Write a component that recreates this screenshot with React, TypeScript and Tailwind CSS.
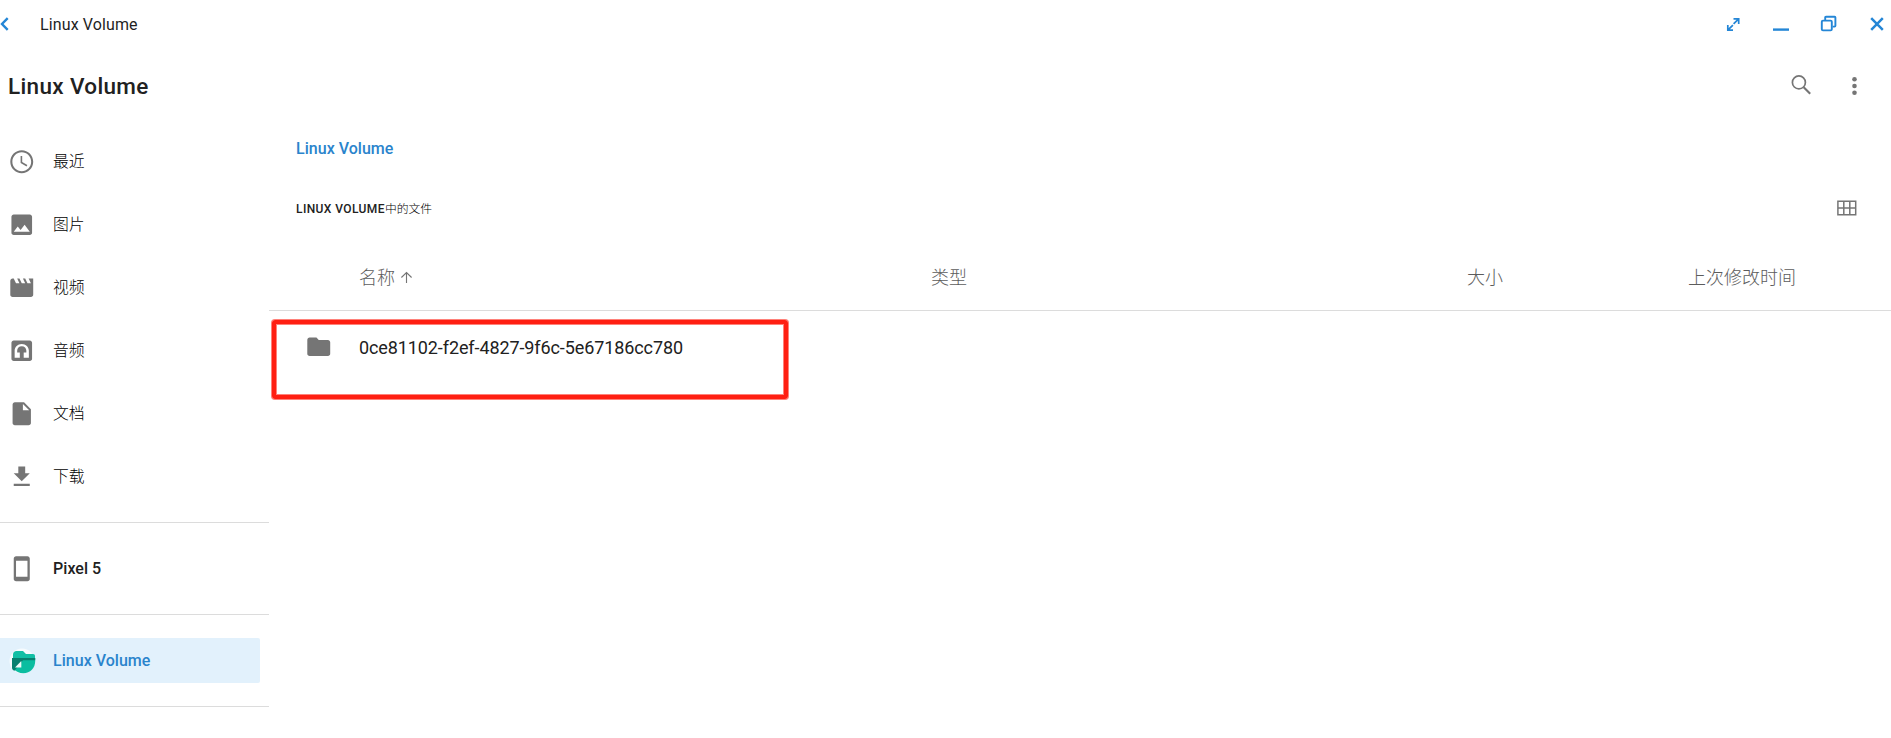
import React from "react";

const SANS = "font-['Roboto','Noto_Sans_CJK_SC',sans-serif]";

function Glyph({ d }: { d: string }) {
  return (
    <svg viewBox="0 0 24 24" className="block h-[27.5px] w-[27.5px] shrink-0 fill-[#757575]">
      <path fillRule="evenodd" d={d} />
    </svg>
  );
}

const icons = {
  recent:
    "M11.99 2C6.47 2 2 6.48 2 12s4.47 10 9.99 10C17.52 22 22 17.52 22 12S17.52 2 11.99 2zM12 20.2c-4.500 0-8.200-3.700-8.200-8.200S7.500 3.800 12 3.800s8.200 3.700 8.200 8.200-3.700 8.200-8.200 8.200zM12.400 7H11v6l5.200 3.100.7-1.200-4.500-2.650z",
  image:
    "M21 19V5c0-1.1-.9-2-2-2H5c-1.1 0-2 .9-2 2v14c0 1.1.9 2 2 2h14c1.1 0 2-.9 2-2zM8.5 13.5l2.5 3.01L14.5 12l4.5 6H5l3.5-4.5z",
  movie:
    "M18 4l2 4h-3l-2-4h-2l2 4h-3l-2-4H8l2 4H7L5 4H4c-1.1 0-1.99.9-1.99 2L2 18c0 1.1.9 2 2 2h16c1.1 0 2-.9 2-2V4h-4z",
  audio:
    "M5 3h14c1.1 0 2 .9 2 2v14c0 1.1-.9 2-2 2H5c-1.1 0-2-.9-2-2V5c0-1.1.9-2 2-2zM12 6c-3.6 0-6.2 2.7-6.2 6.1V18h4.500v-4.500H8v-1.400c0-2.400 1.600-4.100 4-4.100s4 1.700 4 4.100v1.400h-2.300V18h4.500v-5.900C18.200 8.700 15.600 6 12 6z",
  file: "M6 2c-1.1 0-1.990.9-1.990 2L4 20c0 1.100.89 2 1.990 2H18c1.100 0 2-.9 2-2V8l-6-6H6zm7 7V3.500L18.500 9H13z",
  download: "M19 9h-4V3H9v6H5l7 7 7-7zM5 18v2h14v-2H5z",
  phone:
    "M17 1.010L7 1c-1.100 0-1.990.9-1.990 2v18c0 1.100.89 2 1.990 2h10c1.100 0 2-.9 2-2V3c0-1.100-.9-1.990-2-1.990zM17 19H7V5h10v14z",
  folder:
    "M10 4H4c-1.100 0-1.990.9-1.990 2L2 18c0 1.100.9 2 2 2h16c1.100 0 2-.9 2-2V8c0-1.100-.9-2-2-2h-8l-2-2z",
};

const shortcuts = [
  { label: "最近", icon: icons.recent },
  { label: "图片", icon: icons.image },
  { label: "视频", icon: icons.movie },
  { label: "音频", icon: icons.audio },
  { label: "文档", icon: icons.file },
  { label: "下载", icon: icons.download },
];

function VolumeIcon() {
  return (
    <svg viewBox="0 0 28 28" className="block h-7 w-7 shrink-0">
      <circle cx="13" cy="14" r="12.500" fill="#f6fbfe" />
      <path d="M7.500 4h6.500l3 3h7c1.300 0 2 .8 2 2V14H4V7.500C4 5.500 5.500 4 7.500 4z" fill="#12bfa5" />
      <path d="M3 11h23.200v3c0 7.200-5 12.200-11.900 12.200-4 0-7.500-1.600-9.500-4.200z" fill="#0bbda0" />
      <path d="M3 11h23.200v2.200H14L5.500 23.700C3.800 23.300 3 22.300 3 20.500z" fill="#08806f" />
      <path d="M12.300 14v6.500H6z" fill="#effaf8" />
    </svg>
  );
}

function TitleBar() {
  return (
    <header className="flex h-12 items-center justify-between">
      <div className="flex items-center">
        <svg viewBox="0 0 10 14" className="block h-[14px] w-[10px]" fill="none" stroke="#2486d6" strokeWidth="2.400">
          <path d="M7.700 1.200 2 7l5.700 5.800" />
        </svg>
        <span className="ml-[30px] pt-[2px] text-[16px] leading-[24px] tracking-[0.12px] text-[#1f1f1f]">
          Linux Volume
        </span>
      </div>
      <svg viewBox="0 0 165 20" className="mr-[1px] block h-5 w-[165px]" fill="none" stroke="#2486d6" strokeWidth="2">
        <g strokeWidth="1.700">
          <path d="M8.500 4.800h5.200V10M13.700 4.800 8.600 9.900" />
          <path d="M2.800 11v5.200H8M2.800 16.200l5.100-5.100" />
        </g>
        <path d="M48 15.600h16" strokeWidth="2.400" />
        <rect x="96.800" y="6.600" width="10" height="9.800" rx="1.200" strokeWidth="1.900" />
        <path d="M100.200 6V3.600q0-.8.8-.8h8.600q.8 0 .8.800v8.200q0 .8-.8.800h-2" strokeWidth="1.900" />
        <path d="m146.200 4.200 11.600 11.600M157.800 4.200 146.200 15.800" strokeWidth="2.500" />
      </svg>
    </header>
  );
}

function ToolBar() {
  return (
    <div className="flex h-[76px] items-center justify-between pb-[1px] pl-2">
      <h1 className="text-[22.5px] leading-[30px] font-medium tracking-[0.35px] text-[#212121]">Linux Volume</h1>
      <div className="flex items-center pr-[26px]">
        <svg viewBox="0 0 24 24" className="mr-[32px] mb-[2px] block h-6 w-6" fill="none" stroke="#757575">
          <circle cx="9.900" cy="9.400" r="6.500" strokeWidth="1.700" />
          <path d="m14.700 14.200 6.500 6.500" strokeWidth="2.100" />
        </svg>
        <svg viewBox="0 0 20 24" className="block h-6 w-5 fill-[#757575]">
          <circle cx="9.500" cy="5.300" r="2.300" />
          <circle cx="9.500" cy="12" r="2.300" />
          <circle cx="9.500" cy="18.700" r="2.300" />
        </svg>
      </div>
    </div>
  );
}

function Sidebar() {
  return (
    <nav className="w-[269px] shrink-0 text-[16px] text-[#212121]">
      <ul className="pt-[6px]">
        {shortcuts.map((s) => (
          <li key={s.label} className="flex h-[63px] items-center gap-[17.5px] pl-[8px]">
            <Glyph d={s.icon} />
            <span className="text-[15.8px] leading-6 font-light text-black">{s.label}</span>
          </li>
        ))}
      </ul>
      <div className="mt-[14px] flex h-[92px] items-center gap-[17.5px] border-t border-[#dcdcdc] pl-[8px]">
        <Glyph d={icons.phone} />
        <span className="font-medium tracking-[0.05px]">Pixel 5</span>
      </div>
      <div className="flex h-[93px] items-center border-y border-[#dcdcdc]">
        <div className="flex h-[45px] w-[260px] items-center gap-[16px] rounded-r-[2px] bg-[#e2f1fc] pl-[9px]">
          <VolumeIcon />
          <span className="font-medium tracking-[0.03px] text-[#2a84cc]">Linux Volume</span>
        </div>
      </div>
    </nav>
  );
}

function FileList() {
  return (
    <main className="flex min-w-0 flex-1 flex-col">
      <div className="flex h-[50px] items-center pl-[27px] text-[16px] font-medium tracking-[0.03px] text-[#2a84cc]">
        Linux Volume
      </div>
      <div className="flex h-[68px] items-center justify-between pr-[34px] pl-[27px]">
        <span className="pt-[2px] text-[12px] text-[#212121]">
          <span className="font-medium tracking-[0.4px]">LINUX VOLUME</span>
          <span className="text-[11.8px] font-light text-black">中的文件</span>
        </span>
        <svg viewBox="0 0 20 16" className="block h-4 w-5" fill="none" stroke="#757575" strokeWidth="1.500">
          <path d="M.9 1.200h17.800v13.600H.9zM6.800 1.200v13.600M12.800 1.200v13.600M.9 8h17.800" />
        </svg>
      </div>
      <div className="flex h-[69px] items-center border-b border-[#dcdcdc] pt-[2px] pl-[90px] text-[18px] font-light text-[#5c5c5c]">
        <div className="flex w-[572px] items-center gap-[5px]">
          名称
          <svg viewBox="0 0 14 14" className="block h-[13px] w-[13px]" fill="none" stroke="#757575" strokeWidth="1.200">
            <path d="M7 13V1.800M1.500 7 7 1.600 12.500 7" />
          </svg>
        </div>
        <div className="w-[536px]">类型</div>
        <div className="w-[221px]">大小</div>
        <div>上次修改时间</div>
      </div>
      <div className="mt-[9px] ml-[3px] flex h-[79px] w-[516px] items-start rounded-[3px] border-4 border-[#ff1f12] pt-[9px] pl-[28.5px] shadow-[0_0_0_1px_#ff1f1290,inset_0_0_0_1px_#ff1f1290]">
        <Glyph d={icons.folder} />
        <span className="ml-[27px] pt-px text-[18px] leading-[28px] tracking-[-0.1px] text-[#212121]">
          0ce81102-f2ef-4827-9f6c-5e67186cc780
        </span>
      </div>
    </main>
  );
}

export default function App() {
  return (
    <div className={`${SANS} h-[738px] w-full overflow-hidden bg-white`}>
      <TitleBar />
      <ToolBar />
      <div className="flex">
        <Sidebar />
        <FileList />
      </div>
    </div>
  );
}
